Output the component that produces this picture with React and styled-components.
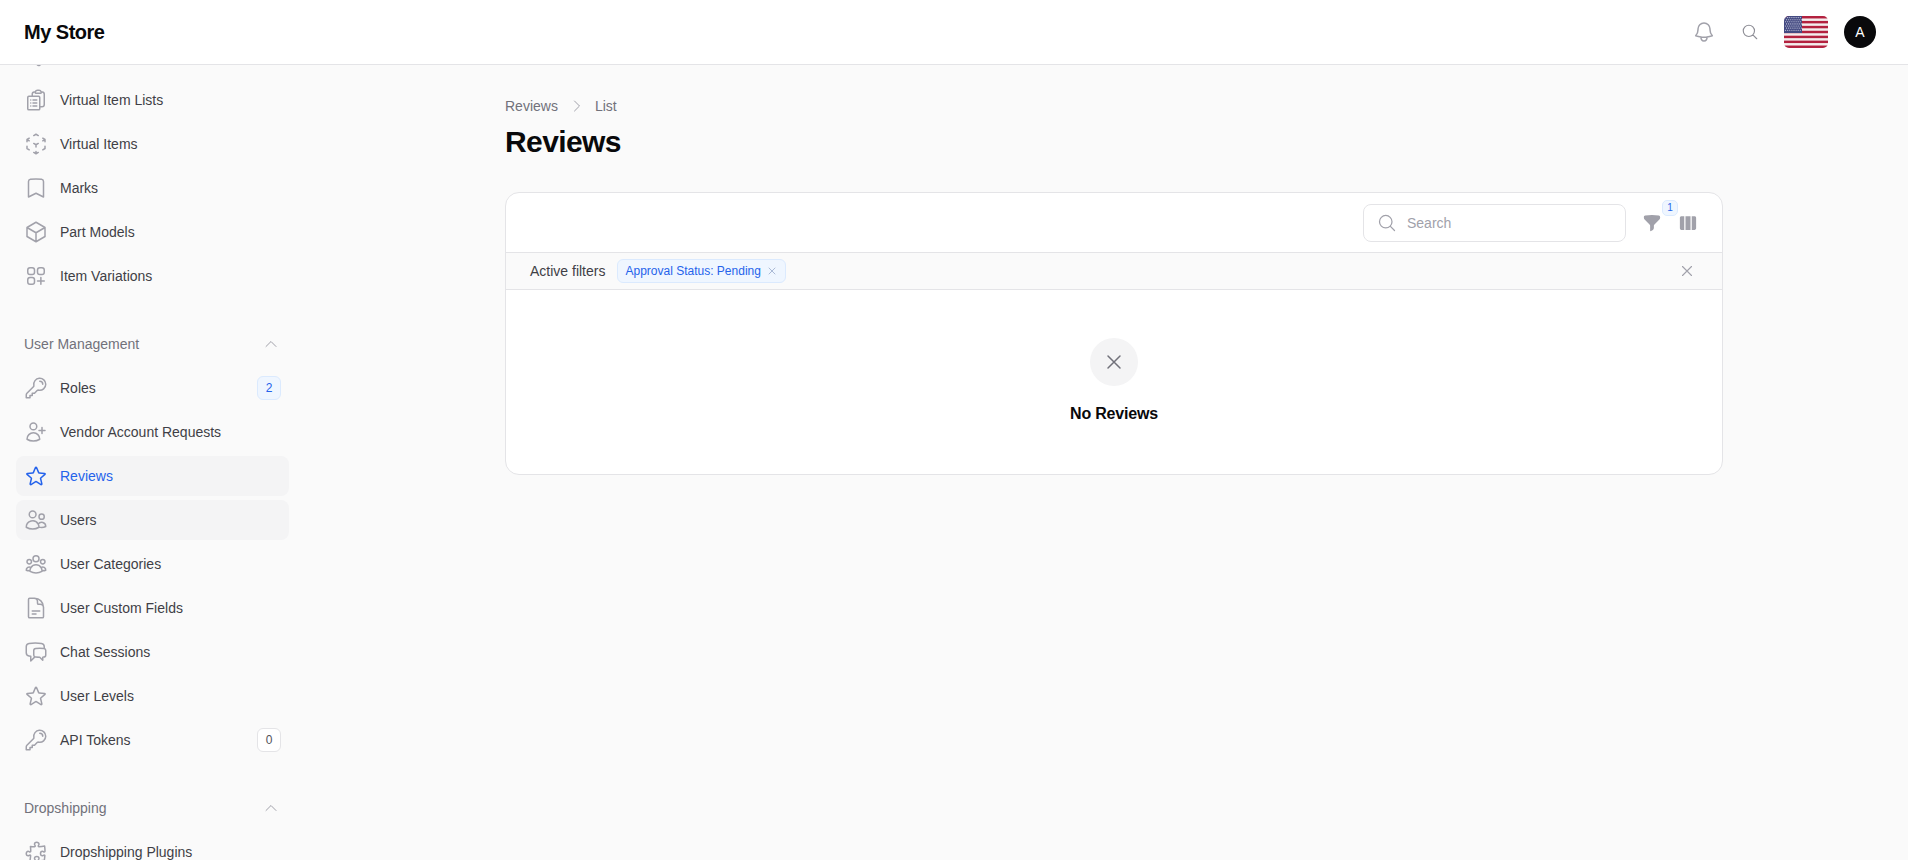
import React from "react";
import styled, { createGlobalStyle } from "styled-components";
import {
  HiOutlineClipboardDocumentList, HiOutlineCubeTransparent, HiOutlineBookmark, HiOutlineCube,
  HiOutlineSquaresPlus, HiOutlineKey, HiOutlineUserPlus, HiOutlineStar, HiOutlineUsers,
  HiOutlineUserGroup, HiOutlineDocumentText, HiOutlineChatBubbleLeftRight, HiOutlinePuzzlePiece,
  HiOutlineBell, HiOutlineMagnifyingGlass, HiOutlineXMark, HiOutlineChevronUp, HiOutlineChevronRight,
  HiFunnel, HiViewColumns, HiOutlineTag,
} from "react-icons/hi2";

const Global = createGlobalStyle`
  html, body { margin: 0; padding: 0; height: 100%; overflow: hidden; background: #fafafa; }
  body { font-family: "Liberation Sans", Arial, sans-serif; font-size: 14px; color: #3f3f46; }
  * { box-sizing: border-box; }
`;

const Page = styled.div`display: flex; flex-direction: column; height: 860px; width: 1908px; overflow: hidden;`;
const Header = styled.header`
  flex: none; height: 65px; display: flex; align-items: center; justify-content: space-between;
  background: #fff; border-bottom: 1px solid #e4e4e7; padding: 0 32px 0 24px; position: relative; z-index: 2;
`;
const Logo = styled.div`font-size: 20px; font-weight: 700; color: #09090b; letter-spacing: -0.5px;`;
const HeaderTools = styled.div`display: flex; align-items: center;`;
const BellBtn = styled.span`display: flex; color: #a1a1aa; margin-right: 25px; font-size: 24px;`;
const SearchBtn = styled.span`display: flex; color: #8e8e96; margin-right: 25px; font-size: 18px;`;
const Flag = styled.svg`display: block; width: 44px; height: 32px; border-radius: 5px; margin-right: 16px;`;
const Avatar = styled.div`
  width: 32px; height: 32px; border-radius: 50%; background: #09090b; color: #fff;
  display: flex; align-items: center; justify-content: center; font-size: 14px;
`;
const Body = styled.div`flex: 1; display: flex; min-height: 0;`;
const Sidebar = styled.nav`flex: none; width: 322px; padding: 0 32px 0 16px; overflow: hidden;`;
const NavList = styled.div`display: flex; flex-direction: column; gap: 4px; margin-top: -29px;`;
const Row = styled.div`
  display: flex; align-items: center; flex: none; height: 40px; padding: 0 8px; gap: 12px; border-radius: 8px;
  width: 273px; background: ${p => (p.$active || p.$hover ? "#f4f4f5" : "transparent")};
  color: ${p => (p.$active ? "#2563eb" : "#3f3f46")};
  & > svg { flex: none; font-size: 24px; color: ${p => (p.$active ? "#2563eb" : "#a1a1aa")}; }
`;
const RowLabel = styled.span`flex: 1; font-size: 14px; white-space: nowrap;`;
const Count = styled.span`
  width: 24px; height: 24px; display: flex; align-items: center; justify-content: center;
  border-radius: 6px; font-size: 12px;
  color: ${p => (p.$blue ? "#2563eb" : "#52525b")};
  background: ${p => (p.$blue ? "#eff6ff" : "#fff")};
  border: 1px solid ${p => (p.$blue ? "#dbeafe" : "#e4e4e7")};
`;
const Group = styled.div`
  display: flex; align-items: center; justify-content: space-between; flex: none; height: 20px;
  padding: 0 10px 0 8px; margin: 34px 0 10px; width: 273px;
  color: #71717a;
  & > svg { font-size: 16px; color: #a1a1aa; }
`;
const Main = styled.main`flex: 1; min-width: 0; padding: 31px 184px 0 183px;`;
const Crumbs = styled.div`display: flex; align-items: center; color: #71717a; height: 20px;`;
const CrumbSep = styled.span`display: flex; color: #a1a1aa; font-size: 16px; margin: 0 10px 0 11px;`;
const Title = styled.h1`margin: 8px 0 0; font-size: 30px; line-height: 36px; font-weight: 700; color: #09090b; letter-spacing: -0.6px;`;
const Card = styled.section`
  margin-top: 32px; width: 1218px; height: 283px; background: #fff; border: 1px solid #e4e4e7; border-radius: 14px; overflow: hidden;
`;
const Toolbar = styled.div`display: flex; align-items: center; height: 60px; padding: 0 24px 0 0; justify-content: flex-end; border-bottom: 1px solid #e4e4e7;`;
const SearchBox = styled.div`
  width: 263px; height: 38px; display: flex; align-items: center; gap: 10px; padding: 0 13px;
  border: 1px solid #e4e4e7; border-radius: 8px; background: #fff; margin-right: 16px; color: #a1a1aa; font-size: 14px;
  & > svg { font-size: 20px; color: #a1a1aa; }
`;
const ToolIcons = styled.div`display: flex; align-items: center; position: relative; color: #a1a1aa; font-size: 20px;`;
const FilterIcon = styled.span`display: flex; width: 20px; margin-right: 16px; font-size: 20px; color: #a1a1aa;`;
const FilterBadge = styled.span`
  position: absolute; left: 20px; top: -13px; width: 16px; height: 16px; border-radius: 5px;
  background: #eff6ff; border: 1px solid #dbeafe; color: #2563eb; font-size: 10px;
  display: flex; align-items: center; justify-content: center;
`;
const ColumnsIcon = styled.span`display: flex; font-size: 20px; color: #a1a1aa;`;
const FilterBar = styled.div`
  display: flex; align-items: center; height: 37px; padding: 0 26px 0 24px; background: #fafafa; border-bottom: 1px solid #e4e4e7;
`;
const FilterLabel = styled.span`color: #3f3f46; margin-right: 12px;`;
const Chip = styled.span`
  display: flex; align-items: center; gap: 5px; height: 24px; padding: 0 7px 0 7px; border-radius: 6px;
  background: #eff6ff; border: 1px solid #dbeafe; color: #2563eb; font-size: 12px;
  & > svg { font-size: 12px; color: #93a5c8; }
`;
const ClearBtn = styled.span`display: flex; margin-left: auto; color: #a1a1aa; font-size: 18px;`;
const Empty = styled.div`display: flex; flex-direction: column; align-items: center; padding-top: 48px;`;
const EmptyCircle = styled.div`
  width: 48px; height: 48px; border-radius: 50%; background: #f4f4f5; display: flex; align-items: center; justify-content: center;
  color: #71717a; font-size: 24px;
`;
const EmptyText = styled.div`margin-top: 16px; font-size: 16px; line-height: 24px; font-weight: 700; color: #09090b; letter-spacing: -0.2px;`;

const UsFlag = () => {
  const stripes = Array.from({ length: 7 }, (_, i) => i);
  const stars = [];
  for (let r = 0; r < 7; r++) for (let c = 0; c < 8; c++) stars.push([1.6 + c * 2.1 + (r % 2), 1.6 + r * 2.1]);
  return (
    <Flag viewBox="0 0 44 32" aria-hidden="true">
      <rect width="44" height="32" fill="#f4eeee" />
      {stripes.map(i => <rect key={i} y={i * 4.92} width="44" height="2.46" fill="#b3213f" />)}
      <rect width="18" height="17" fill="#444a82" />
      {stars.map(([x, y], i) => <circle key={i} cx={x} cy={y} r="0.55" fill="#dfe1ef" />)}
    </Flag>
  );
};

const before = [
  [HiOutlineClipboardDocumentList, "Virtual Item Lists"],
  [HiOutlineCubeTransparent, "Virtual Items"],
  [HiOutlineBookmark, "Marks"],
  [HiOutlineCube, "Part Models"],
  [HiOutlineSquaresPlus, "Item Variations"],
];
const users = [
  { I: HiOutlineKey, t: "Roles", n: "2", blue: true },
  { I: HiOutlineUserPlus, t: "Vendor Account Requests" },
  { I: HiOutlineStar, t: "Reviews", active: true },
  { I: HiOutlineUsers, t: "Users", hover: true },
  { I: HiOutlineUserGroup, t: "User Categories" },
  { I: HiOutlineDocumentText, t: "User Custom Fields" },
  { I: HiOutlineChatBubbleLeftRight, t: "Chat Sessions" },
  { I: HiOutlineStar, t: "User Levels" },
  { I: HiOutlineKey, t: "API Tokens", n: "0" },
];

export default function App() {
  return (
    <Page>
      <Global />
      <Header>
        <Logo>My Store</Logo>
        <HeaderTools>
          <BellBtn><HiOutlineBell /></BellBtn>
          <SearchBtn><HiOutlineMagnifyingGlass /></SearchBtn>
          <UsFlag />
          <Avatar>A</Avatar>
        </HeaderTools>
      </Header>
      <Body>
        <Sidebar>
          <NavList>
            <Row><HiOutlineTag /></Row>
            {before.map(([I, t]) => <Row key={t}><I /><RowLabel>{t}</RowLabel></Row>)}
            <Group><span>User Management</span><HiOutlineChevronUp /></Group>
            {users.map(u => (
              <Row key={u.t} $active={u.active} $hover={u.hover}>
                <u.I /><RowLabel>{u.t}</RowLabel>
                {u.n && <Count $blue={u.blue}>{u.n}</Count>}
              </Row>
            ))}
            <Group><span>Dropshipping</span><HiOutlineChevronUp /></Group>
            <Row><HiOutlinePuzzlePiece /><RowLabel>Dropshipping Plugins</RowLabel></Row>
          </NavList>
        </Sidebar>
        <Main>
          <Crumbs>Reviews<CrumbSep><HiOutlineChevronRight /></CrumbSep>List</Crumbs>
          <Title>Reviews</Title>
          <Card>
            <Toolbar>
              <SearchBox><HiOutlineMagnifyingGlass />Search</SearchBox>
              <ToolIcons>
                <FilterIcon><HiFunnel /></FilterIcon>
                <FilterBadge>1</FilterBadge>
                <ColumnsIcon><HiViewColumns /></ColumnsIcon>
              </ToolIcons>
            </Toolbar>
            <FilterBar>
              <FilterLabel>Active filters</FilterLabel>
              <Chip>Approval Status: Pending<HiOutlineXMark /></Chip>
              <ClearBtn><HiOutlineXMark /></ClearBtn>
            </FilterBar>
            <Empty>
              <EmptyCircle><HiOutlineXMark /></EmptyCircle>
              <EmptyText>No Reviews</EmptyText>
            </Empty>
          </Card>
        </Main>
      </Body>
    </Page>
  );
}
